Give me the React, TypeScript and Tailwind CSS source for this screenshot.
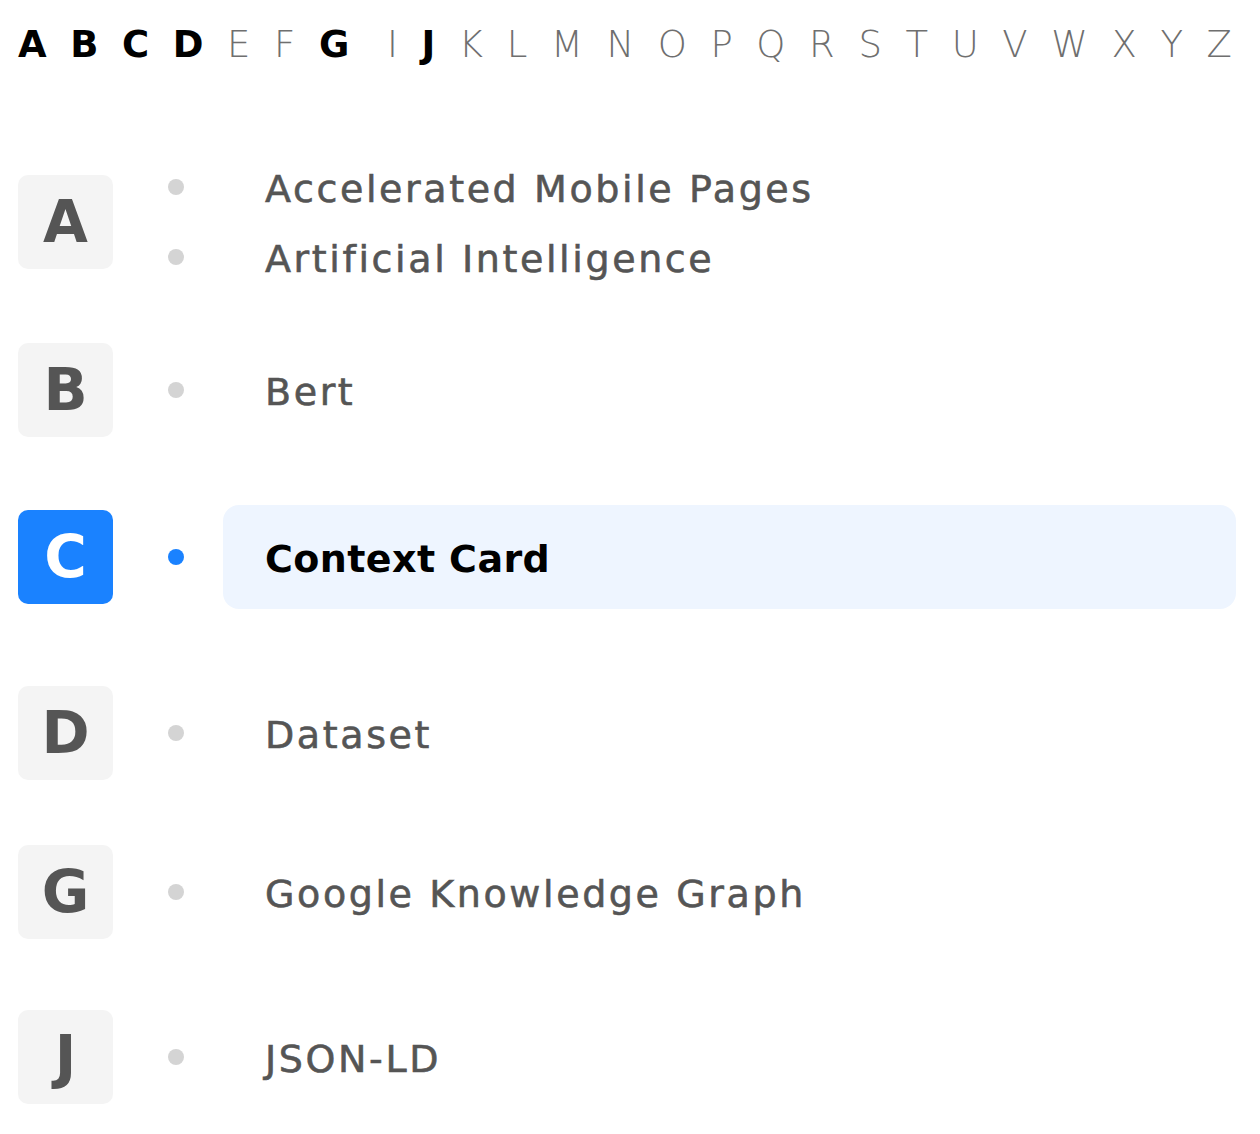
import React from 'react';

const letters = 'ABCDEFG IJKLMNOPQRSTUVWXYZ'.replace(' ', '').split('');
const activeLetters = ['A', 'B', 'C', 'D', 'G', 'J'];

interface Group {
    letter: string;
    terms: string[];
    gapClass: string;
    rowClass: string;
}

const groups: Group[] = [
    { letter: 'A', terms: ['Accelerated Mobile Pages', 'Artificial Intelligence'], gapClass: 'mt-[63px]', rowClass: 'h-[70px]' },
    { letter: 'B', terms: ['Bert'], gapClass: 'mt-[46px]', rowClass: 'h-[104px]' },
    { letter: 'C', terms: ['Context Card'], gapClass: 'mt-[63px]', rowClass: 'h-[104px]' },
    { letter: 'D', terms: ['Dataset'], gapClass: 'mt-[72px]', rowClass: 'h-[104px]' },
    { letter: 'G', terms: ['Google Knowledge Graph'], gapClass: 'mt-[55px]', rowClass: 'h-[104px]' },
    { letter: 'J', terms: ['JSON-LD'], gapClass: 'mt-[61px]', rowClass: 'h-[104px]' },
];

const selected = 'Context Card';

export default function App() {
    return (
        <div className="w-[1260px] min-h-[1134px] bg-white font-['DejaVu_Sans',sans-serif]">
            {/* Alphabet index */}
            <div className="h-[89px] flex items-center justify-between pl-[18px] pr-[28px]">
                {letters.map((l) => {
                    const isActive = activeLetters.includes(l);
                    return (
                        <span
                            key={l}
                            className={`text-[37px] leading-none ${isActive ? 'font-bold text-black' : 'font-extralight text-[#6f6f6f]'} ${l === 'I' ? 'ml-[14px]' : ''}`}
                        >
                            {l}
                        </span>
                    );
                })}
            </div>

            {/* Glossary groups */}
            <div className="pl-[18px] pr-[24px] pb-[30px]">
                {groups.map((group) => {
                    const groupActive = group.terms.includes(selected);
                    return (
                        <div key={group.letter} className={`flex items-center ${group.gapClass}`}>
                            <div
                                className={`w-[95px] h-[94px] flex-shrink-0 rounded-[10px] flex items-center justify-center text-[58px] font-bold leading-none ${groupActive ? 'bg-[#1a82ff] text-white' : 'bg-[#f4f4f4] text-[#555555]'}`}
                            >
                                {group.letter}
                            </div>
                            <div className="flex-1 flex flex-col">
                                {group.terms.map((term) => {
                                    const isSel = term === selected;
                                    return (
                                        <div key={term} className={`flex items-center ${group.rowClass}`}>
                                            <div className={`ml-[55px] w-4 h-4 rounded-full flex-shrink-0 ${isSel ? 'bg-[#1a82ff]' : 'bg-[#d4d4d4]'}`} />
                                            <div
                                                className={`ml-[39px] flex-1 h-full flex items-center pl-[42px] pt-[3px] rounded-2xl text-[38px] leading-none ${isSel ? 'bg-[#eef5ff] font-bold text-black tracking-[0.4px]' : 'text-[#555555] tracking-[2.6px] [-webkit-text-stroke:0.6px_#555555]'}`}
                                            >
                                                {term}
                                            </div>
                                        </div>
                                    );
                                })}
                            </div>
                        </div>
                    );
                })}
            </div>
        </div>
    );
}
